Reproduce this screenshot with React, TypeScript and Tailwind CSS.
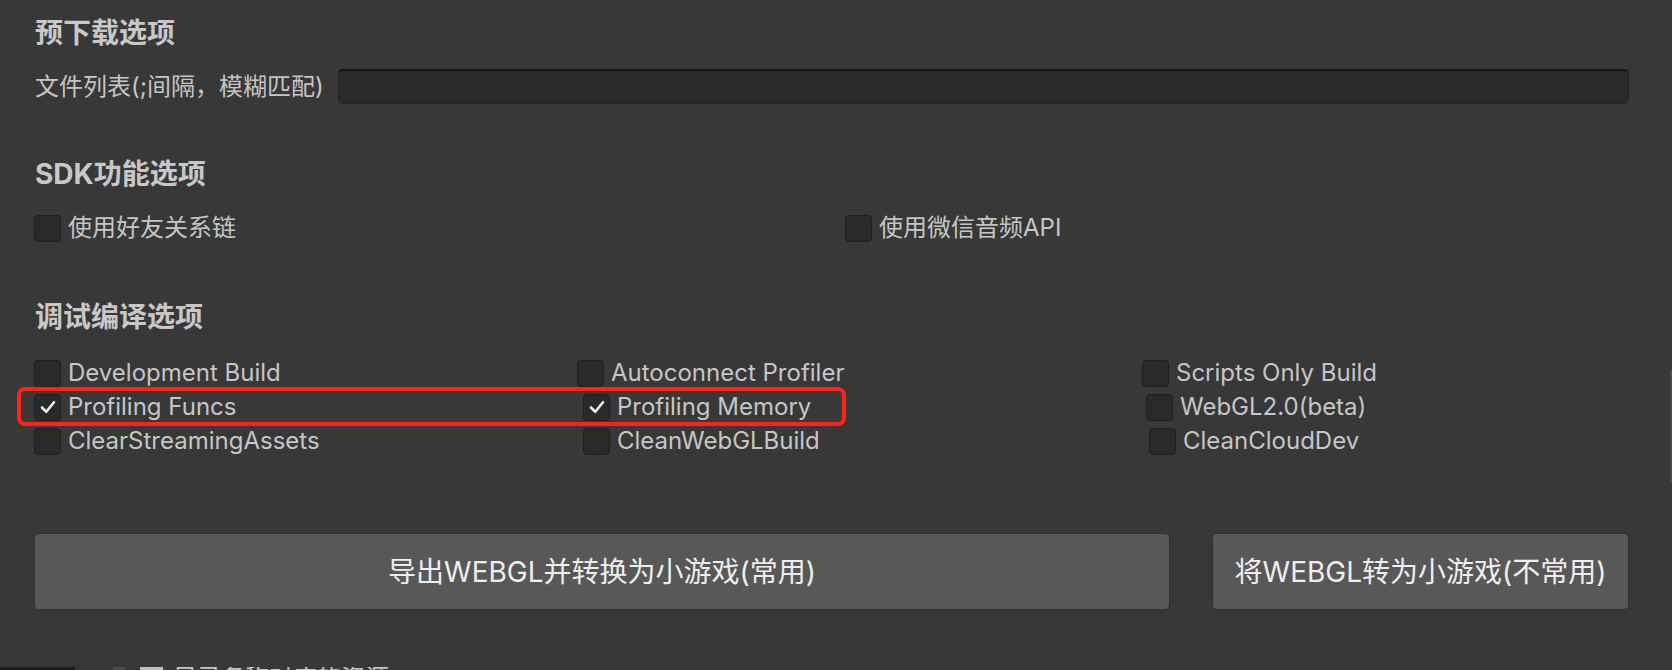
import React from 'react';

type Opt = { label: string; checked?: boolean; offset: string };

// 调试编译选项 三列
const debugRows: Opt[][] = [
    [
        { label: 'Development Build', offset: 'ml-0' },
        { label: 'Autoconnect Profiler', offset: 'ml-0' },
        { label: 'Scripts Only Build', offset: 'ml-0' },
    ],
    [
        { label: 'Profiling Funcs', checked: true, offset: 'ml-0' },
        { label: 'Profiling Memory', checked: true, offset: 'ml-[6px]' },
        { label: 'WebGL2.0(beta)', offset: 'ml-[4px]' },
    ],
    [
        { label: 'ClearStreamingAssets', offset: 'ml-0' },
        { label: 'CleanWebGLBuild', offset: 'ml-[6px]' },
        { label: 'CleanCloudDev', offset: 'ml-[7px]' },
    ],
];

const colWidths = ['w-[543px]', 'w-[565px]', 'flex-1'];

function CheckBox({ checked }: { checked?: boolean }) {
    return (
        <div className="flex h-[27px] w-[27px] shrink-0 items-center justify-center rounded-[4px] border border-[#1f1f1f] bg-[#2a2a2a]">
            {checked ? (
                <svg width="20" height="20" viewBox="0 0 20 20">
                    <path
                        d="M4 10.5 L8.3 14.8 L16 5.2"
                        fill="none"
                        stroke="#ececec"
                        strokeWidth="2.6"
                        strokeLinecap="round"
                        strokeLinejoin="round"
                    />
                </svg>
            ) : null}
        </div>
    );
}

function CheckItem({ label, checked }: { label: string; checked?: boolean }) {
    return (
        <div className="flex items-center gap-[7px]">
            <CheckBox checked={checked} />
            <span className="whitespace-nowrap text-[24px] leading-[28px] text-[#c6c6c6]">
                {label}
            </span>
        </div>
    );
}

function Heading({ children, className }: { children: React.ReactNode; className: string }) {
    return (
        <div
            className={`h-[28px] pl-[1px] text-[28px] font-bold leading-[28px] text-[#c8c8c8] ${className}`}
        >
            {children}
        </div>
    );
}

export default function App() {
    return (
        <div className="flex h-[670px] w-[1672px] flex-col overflow-hidden bg-[#383838] font-['Inter','Noto_Sans_CJK_SC',sans-serif]">
            <div className="flex flex-1">
                <div className="flex flex-1 flex-col pl-[34px] pr-[41px]">
                    {/* 预下载选项 */}
                    <Heading className="mt-[19px]">预下载选项</Heading>
                    <div className="mt-[22px] flex h-[35px] items-center">
                        <div className="w-[304px] whitespace-nowrap pl-[1px] text-[24px] leading-[28px] text-[#c6c6c6]">
                            文件列表(;间隔，模糊匹配)
                        </div>
                        <div className="h-[35px] flex-1 rounded-[5px] border border-t-2 border-[#242424] border-t-[#141414] bg-[#2a2a2a]"></div>
                    </div>

                    {/* SDK功能选项 */}
                    <Heading className="mt-[56px]">SDK功能选项</Heading>
                    <div className="mt-[26px] flex h-[28px] items-center">
                        <div className="w-[811px]">
                            <CheckItem label="使用好友关系链" />
                        </div>
                        <CheckItem label="使用微信音频API" />
                    </div>

                    {/* 调试编译选项 */}
                    <Heading className="mt-[61px]">调试编译选项</Heading>
                    <div className="relative mt-[25px] flex flex-col">
                        {debugRows.map((row, rowIndex) => (
                            <div key={rowIndex} className="flex h-[34px] items-center">
                                {row.map((opt, colIndex) => (
                                    <div key={colIndex} className={colWidths[colIndex]}>
                                        <div className={opt.offset}>
                                            <CheckItem label={opt.label} checked={opt.checked} />
                                        </div>
                                    </div>
                                ))}
                            </div>
                        ))}
                        {/* 红色标注框 */}
                        <div className="pointer-events-none absolute left-[-17px] top-[31px] h-[39px] w-[829px] rounded-[8px] border-[4px] border-[#ff2219]"></div>
                    </div>

                    {/* 按钮 */}
                    <div className="mt-[75px] flex h-[77px] gap-[42px]">
                        <button className="flex w-[1136px] items-center justify-center rounded-[5px] border border-[#303030] bg-[#585858] text-[28px] leading-[32px] text-[#eeeeee]">
                            导出WEBGL并转换为小游戏(常用)
                        </button>
                        <button className="flex flex-1 items-center justify-center rounded-[5px] border border-[#303030] bg-[#585858] text-[28px] leading-[32px] text-[#eeeeee]">
                            将WEBGL转为小游戏(不常用)
                        </button>
                    </div>
                </div>
                {/* 右侧滚动条 */}
                <div className="w-[2px]">
                    <div className="mt-[370px] h-[112px] bg-[#4a4a4a]"></div>
                </div>
            </div>

            {/* 底部被截断的一行 */}
            <div className="flex h-[3px] shrink-0 overflow-hidden">
                <div className="w-[75px] bg-[#1b1b1b]"></div>
                <div className="ml-[38px] w-[12px] bg-[#4c4c4c]"></div>
                <div className="ml-[15px] w-[23px] bg-[#bdbdbd]"></div>
                <div className="ml-[10px] mt-[-1px] whitespace-nowrap text-[24px] leading-[24px] text-[#c6c6c6]">
                    目录名称对应的资源
                </div>
            </div>
        </div>
    );
}
